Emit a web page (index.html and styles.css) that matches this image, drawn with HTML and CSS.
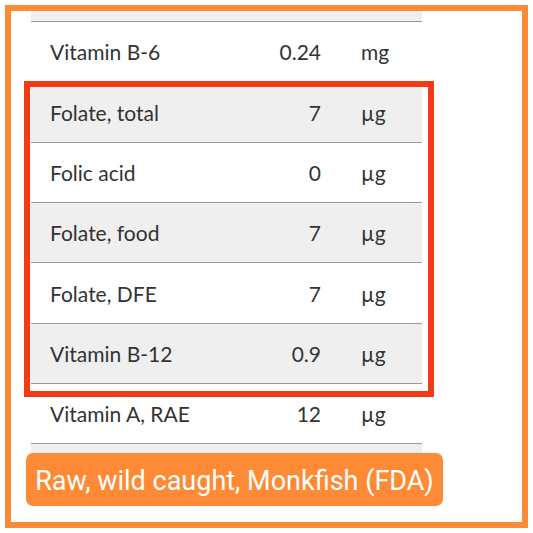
FILE: index.html
```html
<!DOCTYPE html>
<html>
<head>
<meta charset="utf-8">
<link rel="stylesheet" href="styles.css">
</head>
<body>
<div class="frame">
  <div class="table">
    <div class="row alt"></div>
    <div class="row"><span class="name">Vitamin B-6</span><span class="val">0.24</span><span class="unit">mg</span></div>
    <div class="row alt"><span class="name">Folate, total</span><span class="val">7</span><span class="unit">µg</span></div>
    <div class="row"><span class="name">Folic acid</span><span class="val">0</span><span class="unit">µg</span></div>
    <div class="row alt"><span class="name">Folate, food</span><span class="val">7</span><span class="unit">µg</span></div>
    <div class="row"><span class="name">Folate, DFE</span><span class="val">7</span><span class="unit">µg</span></div>
    <div class="row alt"><span class="name">Vitamin B-12</span><span class="val">0.9</span><span class="unit">µg</span></div>
    <div class="row"><span class="name">Vitamin A, RAE</span><span class="val">12</span><span class="unit">µg</span></div>
    <div class="row alt"></div>
  </div>
  <div class="highlight"></div>
  <div class="badge">Raw, wild caught, Monkfish (FDA)</div>
</div>
</body>
</html>
```
FILE: styles.css
```css
html, body {
  margin: 0;
  padding: 0;
  background: #ffffff;
}
.frame {
  position: relative;
  box-sizing: border-box;
  margin: 5px 0 0 5px;
  width: 523px;
  height: 523px;
  border: 6px solid #ff8a35;
  overflow: hidden;
  background: #ffffff;
}
.table {
  margin: -49px 0 0 20px;
  width: 391px;
  font-family: Lato, "Noto Sans", sans-serif;
  font-size: 21px;
  color: #333333;
}
.row {
  box-sizing: border-box;
  height: 60.3px;
  display: grid;
  grid-template-columns: 210px 80px 101px;
  align-items: center;
  border-bottom: 1px solid #9a9a9a;
  background: #ffffff;
}
.row.alt {
  background: #efefef;
}
.name {
  padding-left: 19px;
}
.val {
  text-align: right;
}
.unit {
  padding-left: 40px;
}
.highlight {
  position: absolute;
  left: 13px;
  top: 70px;
  width: 410px;
  height: 316px;
  box-sizing: border-box;
  border: 6px solid #f23a16;
}
.badge {
  position: absolute;
  left: 15px;
  top: 442px;
  width: 417px;
  height: 53px;
  border-radius: 7px;
  background: #ff8a35;
  color: #ffffff;
  font-family: Roboto, "Liberation Sans", sans-serif;
  font-size: 27px;
  display: flex;
  align-items: center;
  justify-content: center;
  padding-top: 3px;
  box-sizing: border-box;
  white-space: nowrap;
}
```
